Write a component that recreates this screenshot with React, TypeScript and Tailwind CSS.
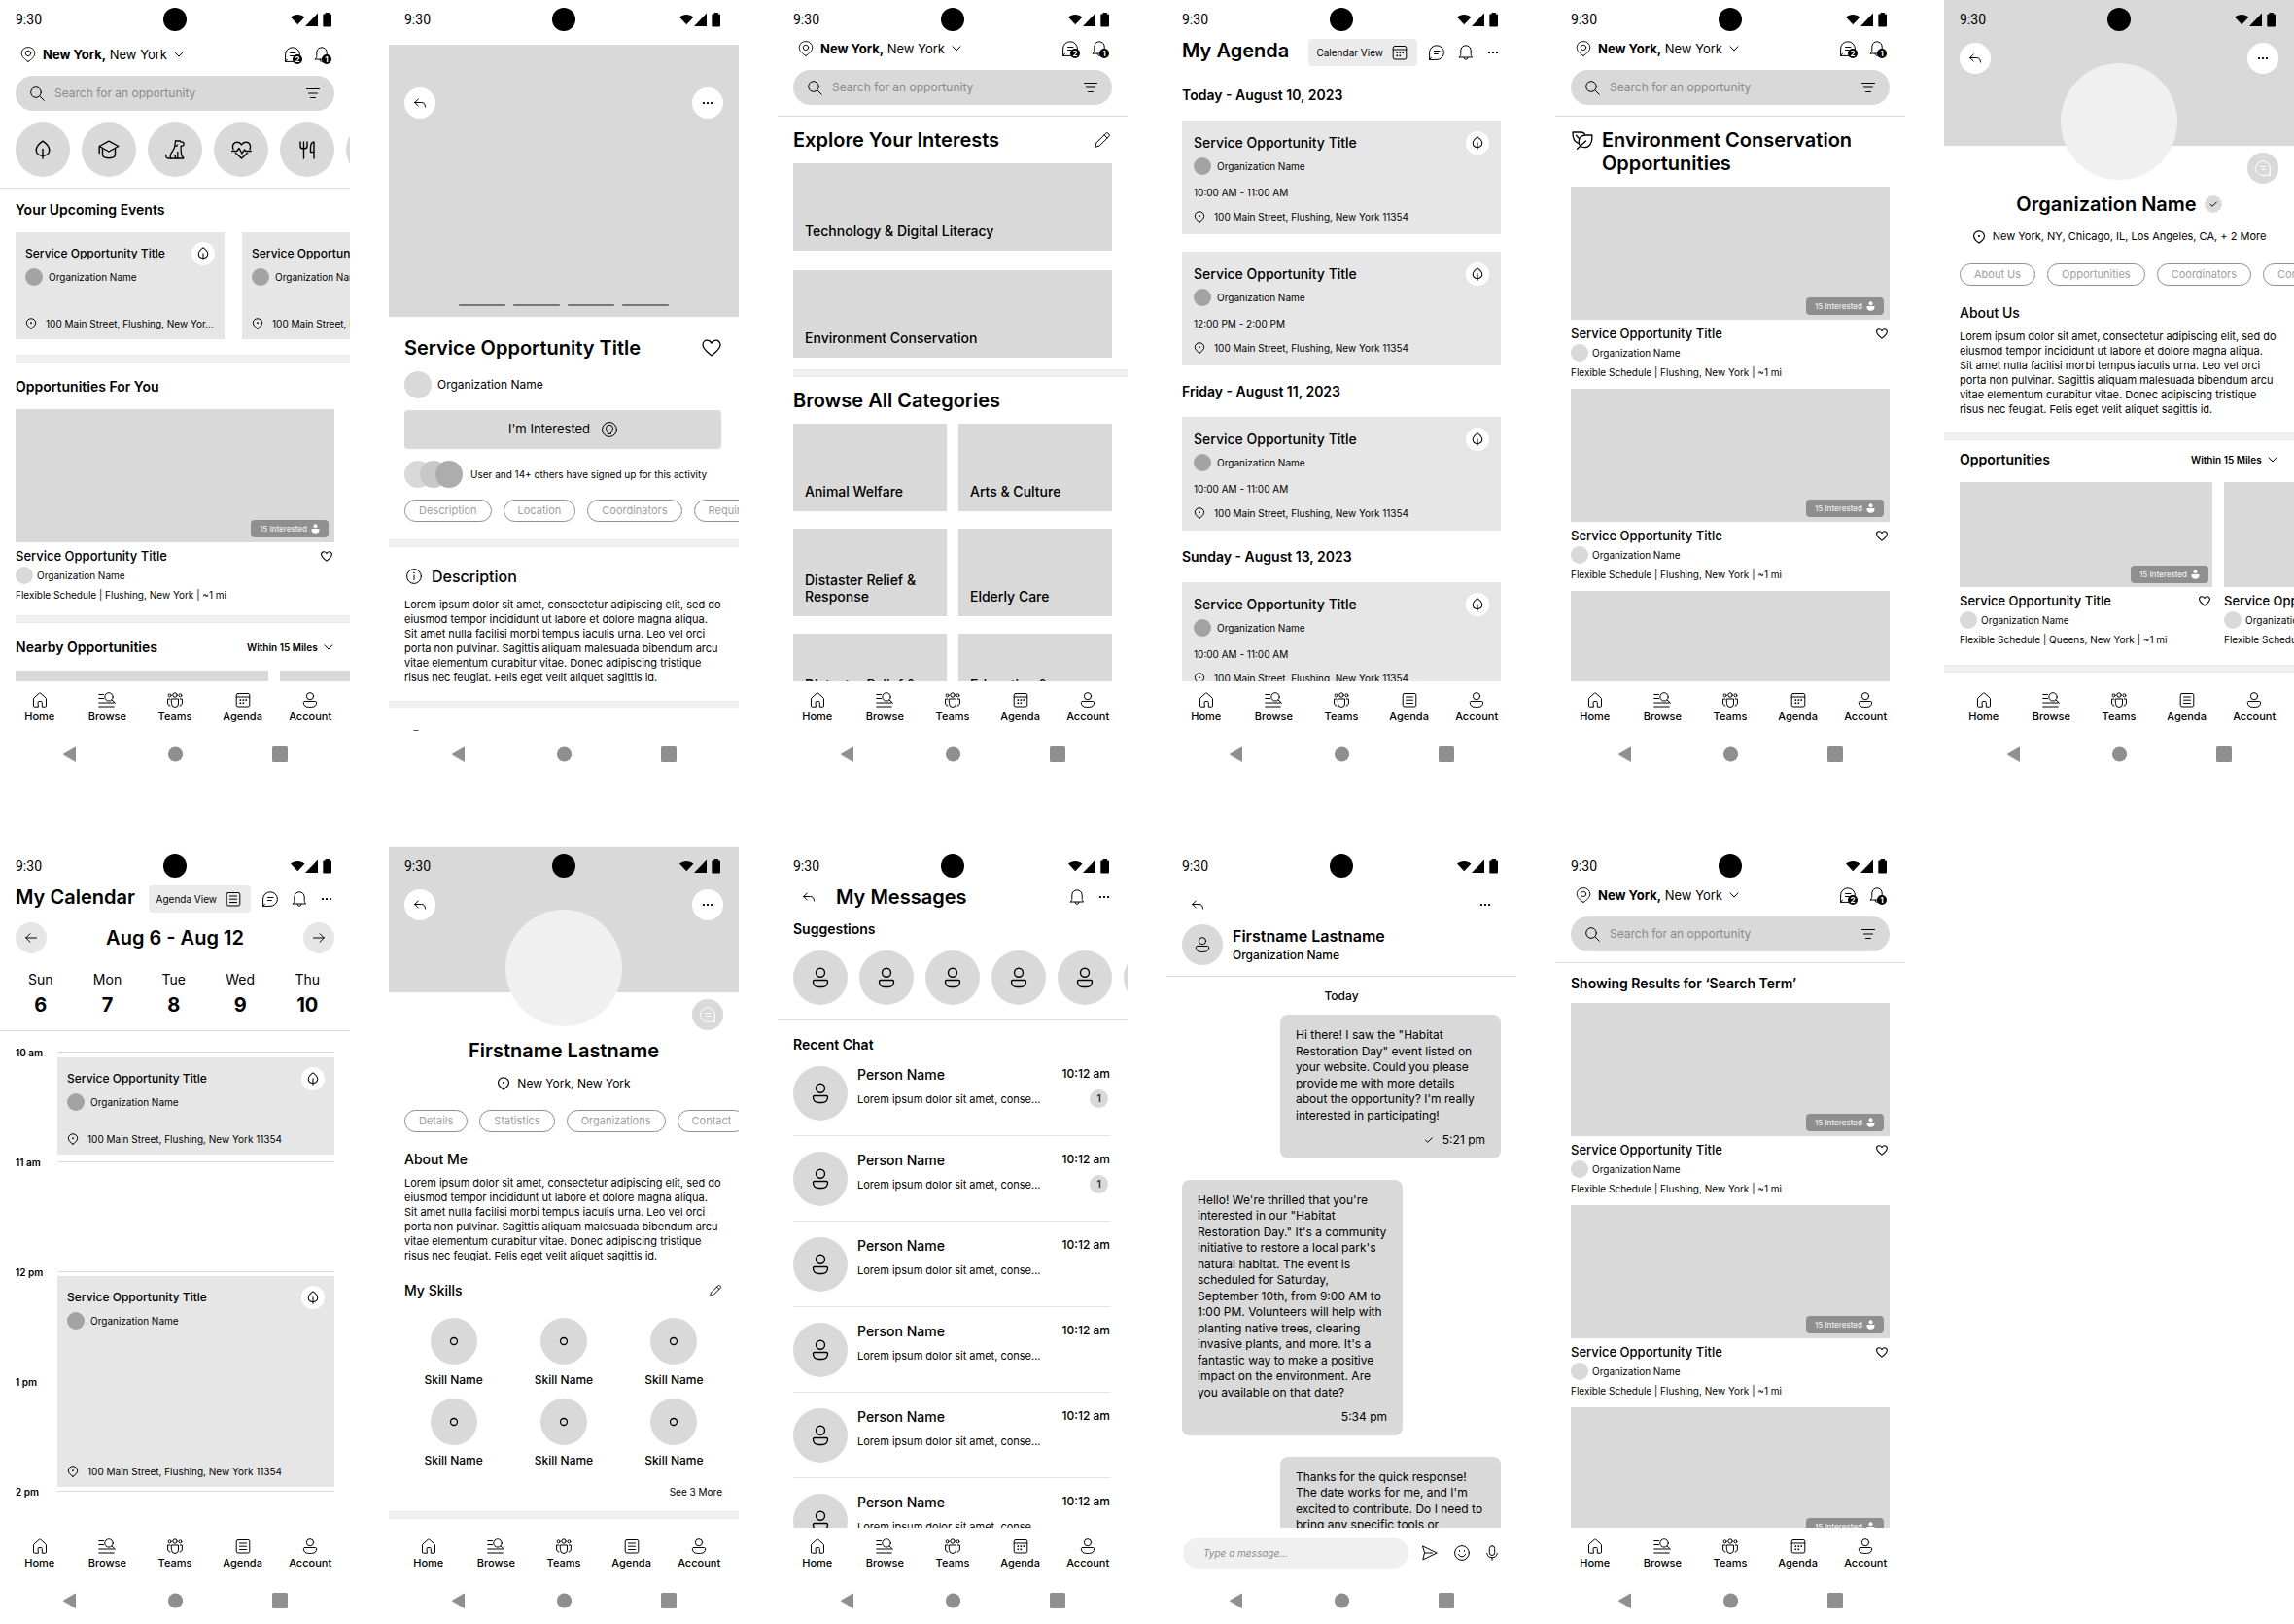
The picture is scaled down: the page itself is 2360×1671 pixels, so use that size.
import React from "react";

type IconProps = { w: number; h: number; vb?: string; sw?: number; className?: string; children: React.ReactNode };

function Icon({ w, h, vb, sw = 1, className = "", children }: IconProps) {
  return (
    <svg
      width={w}
      height={h}
      viewBox={vb ?? `0 0 ${w} ${h}`}
      fill="none"
      stroke="currentColor"
      strokeWidth={sw}
      strokeLinecap="round"
      strokeLinejoin="round"
      className={`shrink-0 ${className}`}
      aria-hidden="true"
    >
      {children}
    </svg>
  );
}

/* ---------- icons ---------- */

const PinIcon = ({ size = 16 }: { size?: number }) => (
  <Icon w={size} h={size} vb="0 0 16 16" sw={0.9}>
    <path d="M8 15.4C4.6 13.2 1.2 10.4 1.2 6.8A6.6 6.3 0 0 1 8 .6a6.6 6.3 0 0 1 6.8 6.2c0 3.6-3.4 6.400-6.800 8.600Z" />
    <circle cx="8" cy="6.900" r="2.700" />
  </Icon>
);
const PinDotIcon = ({ size = 12 }: { size?: number }) => (
  <Icon w={size} h={size} vb="0 0 12 12">
    <path d="M6 11.200C3.500 9.600 1.300 7.600 1.300 5.200A4.600 4.500 0 0 1 6 .8a4.600 4.500 0 0 1 4.700 4.400c0 2.400-2.200 4.400-4.700 6Z" />
    <circle cx="6" cy="5.200" r=".9" fill="currentColor" stroke="none" />
  </Icon>
);
const ChevronIcon = () => (
  <Icon w={10} h={6} sw={1}>
    <path d="M1 .8 5 5 9 .8" />
  </Icon>
);
const SearchIcon = () => (
  <Icon w={15} h={15}>
    <circle cx="6" cy="6" r="5.300" />
    <path d="m10 10 4.300 4.300" />
  </Icon>
);
const FilterIcon = () => (
  <Icon w={14} h={10}>
    <path d="M.5.5h13M2.500 5h9M4.500 9.500h5" />
  </Icon>
);
const ChatIcon = ({ flip = false }: { flip?: boolean }) => (
  <Icon w={16} h={16} className={flip ? "-scale-x-100" : ""}>
    <path d="M.6 15.400V8A7.400 7.300 0 1 1 8 15.400H.6l1.800-2.200" />
    <path d="M5.500 6.500h5.500M5.500 9.500h3.800" />
  </Icon>
);
const BellIcon = () => (
  <Icon w={16} h={16}>
    <path d="M1.300 13h13.400c-1-.8-1.500-2-1.500-3.500V6A5.200 5.200 0 0 0 8 .8 5.200 5.200 0 0 0 2.800 6v3.500c0 1.500-.5 2.700-1.500 3.500Z" />
    <path d="M6 13.300a2 2 0 0 0 4 0" />
  </Icon>
);
const DotsIcon = () => (
  <Icon w={12} h={4}>
    <g fill="currentColor" stroke="none">
      <rect x="1" y="1" width="2" height="2" rx=".5" />
      <rect x="5" y="1" width="2" height="2" rx=".5" />
      <rect x="9" y="1" width="2" height="2" rx=".5" />
    </g>
  </Icon>
);
const BackIcon = () => (
  <Icon w={12} h={10}>
    <path d="M4.300 1 .7 4.500 4.300 8M.7 4.500H7.500c2.500 0 4 1.500 4 4.500" />
  </Icon>
);
const ArrowLeftIcon = () => (
  <Icon w={12} h={10}>
    <path d="M5 .7.7 5 5 9.300M.7 5h10.800" />
  </Icon>
);
const ArrowRightIcon = () => (
  <Icon w={12} h={10}>
    <path d="M7 .7 11.300 5 7 9.300M11.300 5H.5" />
  </Icon>
);
const HomeIcon = () => (
  <Icon w={16} h={16}>
    <path d="M6 15.200H2.500a1 1 0 0 1-1-1V6.800c0-.4.2-.7.5-.9L7.300 1.200c.4-.4 1-.4 1.400 0L14 5.900c.3.200.5.500.5.9v7.400a1 1 0 0 1-1 1H10.300V10.500a1 1 0 0 0-1-1H7a1 1 0 0 0-1 1Z" />
  </Icon>
);
const BrowseIcon = () => (
  <Icon w={18} h={16}>
    <path d="M.7 2.500h4.800M.7 6.500h4.800M.7 11h15.500M.7 15h15.500" />
    <circle cx="11" cy="4.900" r="4.200" fill="white" />
    <path d="m14.200 8.200 3.300 3" />
  </Icon>
);
const TeamsIcon = () => (
  <Icon w={16} h={16}>
    <circle cx="8" cy="3" r="2.200" />
    <circle cx="2.600" cy="3.300" r="1.500" />
    <circle cx="13.400" cy="3.300" r="1.500" />
    <path d="M4.500 7h7v5a3.500 3.500 0 0 1-7 0Z" />
    <path d="M2.800 7H.6v4c0 1.800 1 3 2.400 3M13.200 7h2.200v4c0 1.800-1 3-2.400 3" />
  </Icon>
);
const CalendarIcon = () => (
  <Icon w={16} h={16}>
    <rect x="1.200" y="1.500" width="13.600" height="13.500" rx="1.800" />
    <path d="M1.200 5h13.600" />
    <g fill="currentColor" stroke="none">
      <rect x="4.500" y="7.300" width="1.600" height="1.600" />
      <rect x="7.500" y="7.300" width="1.600" height="1.600" />
      <rect x="10.400" y="7.300" width="1.600" height="1.600" />
      <rect x="4.500" y="10.500" width="1.600" height="1.600" />
      <rect x="7.500" y="10.500" width="1.600" height="1.600" />
    </g>
  </Icon>
);
const ListIcon = () => (
  <Icon w={16} h={16}>
    <rect x="1.200" y="1.500" width="13.600" height="13.500" rx="1.800" />
    <path d="M4.500 5h7M4.500 8.200h7M4.500 11.500h7" />
  </Icon>
);
const PersonIcon = () => (
  <Icon w={16} h={16}>
    <circle cx="8" cy="4.200" r="3.600" />
    <path d="M2.500 9.500h11c.7 0 1.200.5 1.200 1.200 0 3-2 4.700-5 4.700H6.300c-3 0-5-1.700-5-4.700 0-.7.5-1.200 1.200-1.200Z" />
  </Icon>
);
const AvatarIcon = () => (
  <Icon w={18} h={22} sw={1.400}>
    <circle cx="9" cy="5.800" r="4.500" />
    <path d="M2.800 13.500h12.400c.8 0 1.300.5 1.300 1.200 0 3.500-2.300 5.800-5.500 5.800H7c-3.200 0-5.500-2.300-5.500-5.800 0-.7.5-1.200 1.300-1.200Z" />
  </Icon>
);
const LeafIcon = ({ small = false }: { small?: boolean }) => (
  <Icon w={small ? 12 : 16} h={small ? 14 : 20} vb="0 0 16 20" sw={small ? 1.5 : 1.400}>
    <path d="M8 1.200C4.500 3.600 1.200 6.800 1.200 10.400c0 3.600 3 6 6.800 6s6.800-2.400 6.800-6C14.800 6.800 11.500 3.600 8 1.200Z" />
    <path d="M8 9.500v9.500" />
  </Icon>
);
const CapIcon = () => (
  <Icon w={22} h={20} sw={1.400}>
    <path d="M1.200 6.500 11 1.200l9.800 5.300L11 12 1.200 6.500v7" />
    <path d="M4.500 8.500v6.800c0 2 2.500 3.400 6.500 3.400s6.500-1.400 6.500-3.400V8.500" />
  </Icon>
);
const DogIcon = () => (
  <Icon w={20} h={20} sw={1.300}>
    <path d="M10.500 1h4.800l.9 1.200h1.800c.7 0 1 .4 1 1v1.500c0 .9-.8 1.500-2 1.500h-.8c-.5 3.300.3 5.500.3 8.300 0 1.600.3 2 1.200 2.600.8.500 1.100 1 1.100 1.900H3A2.300 2.300 0 0 1 .8 16.800v-1.300" />
    <path d="M10.500 1 9.800 5.500c.4 1.200 2.200 1.200 2.700-.5M9.800 6.500c-.3 4-4.600 6-4.600 10.200 0 .9.200 1.600.6 2.300M12.800 12.500V19M9 15.500c1.600.6 1.800 2 1.500 3.500" />
  </Icon>
);
const HeartPulseIcon = () => (
  <Icon w={21} h={19} sw={1.400}>
    <path d="M2 8.500C.5 4.500 2.500 1.200 5.800 1.200c2 0 3.600 1 4.700 2.800 1.100-1.800 2.700-2.800 4.700-2.800 3.300 0 5.300 3.300 3.800 7.300M4.500 12.500l6 5.500 6-5.500" />
    <path d="M.7 10.500h5l2.300-3 3 5.500 2.500-4 1.200 1.500h5.600" />
  </Icon>
);
const ForkIcon = () => (
  <Icon w={16} h={19} sw={1.400}>
    <path d="M1 1v4.500c0 1.500 1.200 2.500 3.500 2.500S8 7 8 5.500V1M4.500 1v17M15 1v17M15 1c-2.500.5-3.500 2.500-3.500 6v4.500H15" />
  </Icon>
);
const HeartIcon = ({ big = false }: { big?: boolean }) => (
  <Icon w={big ? 20 : 12} h={big ? 18 : 11} vb="0 0 20 18" sw={big ? 1.300 : 1.800}>
    <path d="M10 16.800C6 13.500 1 10.200 1 5.800 1 3 3 1.200 5.400 1.200c1.900 0 3.500 1 4.600 2.900 1.100-1.900 2.700-2.900 4.600-2.900C17 1.200 19 3 19 5.800c0 4.400-5 7.700-9 11Z" />
  </Icon>
);
const PencilIcon = ({ size = 16 }: { size?: number }) => (
  <Icon w={size} h={size} vb="0 0 16 16" sw={size < 16 ? 1.300 : 1}>
    <path d="M.8 15.200 2 10.800 11.500 1.300a2 2 0 0 1 2.800 0l.4.4a2 2 0 0 1 0 2.800L5.200 14 .8 15.200ZM10 2.900 13.100 6" />
  </Icon>
);
const InfoIcon = () => (
  <Icon w={16} h={16}>
    <circle cx="8" cy="8" r="7.400" />
    <path d="M8 7v4.500" />
    <circle cx="8" cy="4.500" r=".8" fill="currentColor" stroke="none" />
  </Icon>
);
const BulbIcon = () => (
  <Icon w={16} h={16}>
    <circle cx="8" cy="8" r="7.400" />
    <path d="M6.500 10.700c0-1-2-1.800-2-3.900a3.500 3.500 0 0 1 7 0c0 2.100-2 2.900-2 3.900v1.800h-3ZM6.500 10.700h3" />
  </Icon>
);
const LeavesIcon = () => (
  <Icon w={22} h={19} sw={1.300}>
    <path d="M6.500 12.300C2.300 10.800.8 7 1 1h8.500c2 0 3.400.8 4 2.200M4.500 4.300l3.300 3.500" />
    <path d="M20.900 4H14.500C9.800 4 7.200 7.200 7.200 11c0 3.400 2.500 5.700 6 5.700 5 0 8.200-4.700 7.700-12.700ZM5.500 18.300 9 15l5.500-5" />
  </Icon>
);
const SendIcon = () => (
  <Icon w={16} h={16}>
    <path d="M.8 1 15.200 8 .8 15 2.500 8ZM2.500 8h8" />
  </Icon>
);
const SmileIcon = () => (
  <Icon w={16} h={16}>
    <circle cx="8" cy="8" r="7.400" />
    <path d="M4.500 9.500c.8 1.600 2 2.300 3.500 2.300s2.700-.7 3.500-2.300" />
    <path d="M5.500 5.500v.8M10.500 5.500v.8" />
  </Icon>
);
const MicIcon = () => (
  <Icon w={12} h={16}>
    <rect x="3.300" y=".7" width="5.400" height="9.800" rx="2.700" />
    <path d="M.7 8.500c.3 2.700 2.300 4.300 5.300 4.300s5-1.600 5.300-4.300M6 12.800v2.500" />
  </Icon>
);
const CheckIcon = () => (
  <Icon w={8} h={6}>
    <path d="M.6 3.200 2.800 5.300 7.400.7" />
  </Icon>
);
const VerifiedIcon = () => (
  <Icon w={18} h={18}>
    <circle cx="9" cy="9" r="8" fill="#d9d9d9" stroke="#d9d9d9" strokeWidth="2" strokeDasharray="1.500 2.690" />
    <path d="M6 9.300 8.100 11.200 12.300 7" />
  </Icon>
);

/* ---------- phone shell ---------- */

function StatusBar({ shaded = false }: { shaded?: boolean }) {
  return (
    <div className={`grid h-10 shrink-0 grid-cols-3 items-center px-4 ${shaded ? "bg-[#d9d9d9]" : ""}`}>
      <span className="font-[Roboto,sans-serif] text-sm">9:30</span>
      <span className="size-6 justify-self-center rounded-full bg-black" />
      <Icon w={43} h={16} className="mr-[2px] justify-self-end">
        <g fill="currentColor" stroke="none">
          <path d="M0 5.500C4.300 2 10.200 2 14.500 5.500L7.250 13.300Z" />
          <path d="M15 15H28V1.500Z" />
          <rect x="33.300" y="2.500" width="8.700" height="13" rx="1" />
          <rect x="35.500" y="1" width="4.300" height="3" />
        </g>
      </Icon>
    </div>
  );
}

function SystemNav() {
  return (
    <div className="flex h-12 shrink-0 items-center justify-between px-16 text-[#8f8f8f]">
      <button aria-label="Back">
        <Icon w={16} h={16}>
          <path d="M1.500 8 13.500 1v14Z" fill="currentColor" />
        </Icon>
      </button>
      <button aria-label="Home screen">
        <Icon w={16} h={16}>
          <circle cx="8.500" cy="8" r="7.600" fill="currentColor" stroke="none" />
        </Icon>
      </button>
      <button aria-label="Recent apps">
        <Icon w={16} h={16}>
          <rect x="0" y="0" width="16" height="16" rx="1.500" fill="currentColor" stroke="none" />
        </Icon>
      </button>
    </div>
  );
}

function TabBar({ agenda = "calendar" }: { agenda?: "calendar" | "list" }) {
  const tabs: [string, React.ReactNode][] = [
    ["Home", <HomeIcon />],
    ["Browse", <BrowseIcon />],
    ["Teams", <TeamsIcon />],
    ["Agenda", agenda === "list" ? <ListIcon /> : <CalendarIcon />],
    ["Account", <PersonIcon />],
  ];
  return (
    <nav className="grid h-[51px] shrink-0 grid-cols-5 px-[6px] pt-[11px]">
      {tabs.map(([label, icon]) => (
        <a key={label} href="#" className="flex flex-col items-center gap-[2px] text-[11px] leading-[14px] font-medium">
          {icon}
          {label}
        </a>
      ))}
    </nav>
  );
}

type PhoneProps = { shaded?: boolean; footer?: React.ReactNode; children: React.ReactNode };

function Phone({ shaded, footer, children }: PhoneProps) {
  return (
    <section className="flex aspect-[9/20] flex-col overflow-hidden bg-white">
      <StatusBar shaded={shaded} />
      <div className="min-h-0 flex-1 overflow-hidden">{children}</div>
      {footer}
      <SystemNav />
    </section>
  );
}

/* ---------- shared parts ---------- */

const Band = ({ className = "" }: { className?: string }) => (
  <div className={`h-2 border-y border-[#e9e9e9] bg-[#f0f0f0] ${className}`} />
);

function Badge({ children }: { children: React.ReactNode }) {
  return (
    <span className="absolute -right-[2px] -bottom-[2px] flex size-[10px] items-center justify-center rounded-full bg-black text-[8px] leading-none font-bold text-white">
      {children}
    </span>
  );
}

function SearchHeader() {
  return (
    <header>
      <div className="flex h-5 items-center justify-between px-[21px]">
        <button className="flex items-center gap-[7px] text-[13px] leading-5">
          <PinIcon />
          <span>
            <b className="font-bold">New York,</b> New York
          </span>
          <ChevronIcon />
        </button>
        <div className="flex gap-[14px]">
          <button className="relative" aria-label="Messages">
            <ChatIcon />
            <Badge>2</Badge>
          </button>
          <button className="relative" aria-label="Notifications">
            <BellIcon />
            <Badge>1</Badge>
          </button>
        </div>
      </div>
      <div className="mx-4 mt-3 flex h-9 items-center gap-[10px] rounded-full bg-[#d9d9d9] px-[15px]">
        <SearchIcon />
        <input
          type="search"
          aria-label="Search for an opportunity"
          placeholder="Search for an opportunity"
          className="min-w-0 flex-1 bg-transparent text-xs outline-none placeholder:text-[#8a8a8a]"
        />
        <button aria-label="Filter">
          <FilterIcon />
        </button>
      </div>
    </header>
  );
}

const RoundButton = ({ label, className, children }: { label: string; className: string; children: React.ReactNode }) => (
  <button aria-label={label} className={`flex size-8 shrink-0 items-center justify-center rounded-full ${className}`}>
    {children}
  </button>
);

function EventCard({ compact = false, time, address, className = "" }: { compact?: boolean; time?: string; address: string; className?: string }) {
  return (
    <article className={`flex flex-col bg-[#e6e6e6] ${compact ? "p-[10px]" : "px-3 pt-[11px] pb-3"} ${className}`}>
      <div className="flex h-6 items-center justify-between">
        <h3 className={`whitespace-nowrap font-medium ${compact ? "text-xs" : "text-sm"}`}>Service Opportunity Title</h3>
        <span className="flex size-6 shrink-0 items-center justify-center rounded-full bg-white">
          <LeafIcon small />
        </span>
      </div>
      <div className="mt-[3px] flex items-center gap-[6px] text-[10px] leading-[18px]">
        <span className="size-[18px] shrink-0 rounded-full bg-[#a3a3a3]" />
        <span className="whitespace-nowrap">Organization Name</span>
      </div>
      {time && <p className="mt-3 text-[10px] leading-3">{time}</p>}
      <div className={`flex items-center gap-[9px] text-[10px] leading-3 ${time ? "mt-[13px]" : "mt-auto"}`}>
        <PinDotIcon />
        <span className="whitespace-nowrap">{address}</span>
      </div>
    </article>
  );
}

function OpportunityCard({ small = false, place = "Flushing", className = "" }: { small?: boolean; place?: string; className?: string }) {
  return (
    <article className={className}>
      <div className={`relative bg-[#d9d9d9] ${small ? "h-[108px]" : "h-[137px]"}`}>
        <span
          className={`absolute flex h-[18px] w-20 items-center justify-center gap-1 rounded bg-[#8f8f8f] text-[8px] font-medium text-[#f0f0f0] ${
            small ? "right-1 bottom-1" : "right-[6px] bottom-[5px]"
          }`}
        >
          15 Interested
          <Icon w={9} h={10}>
            <g fill="white" stroke="none">
              <circle cx="4.500" cy="2.200" r="2" />
              <path d="M1.200 5h6.600c.5 0 .8.3.8.8 0 2.700-1.600 4-4.100 4S.4 8.500.4 5.800c0-.5.3-.8.8-.8Z" />
            </g>
          </Icon>
        </span>
      </div>
      <div className="mt-1 flex h-5 items-center justify-between pr-[2px]">
        <h3 className="whitespace-nowrap text-[13px] leading-5 font-medium">Service Opportunity Title</h3>
        <button aria-label="Save">
          <HeartIcon />
        </button>
      </div>
      <div className="mt-[1px] flex items-center gap-1 text-[10px] leading-[18px]">
        <span className="size-[18px] shrink-0 rounded-full bg-[#d9d9d9]" />
        <span className="whitespace-nowrap">Organization Name</span>
      </div>
      <p className="mt-1 text-[10px] leading-[14px] whitespace-nowrap">Flexible Schedule | {place}, New York | ~1 mi</p>
    </article>
  );
}

function RangeSelect() {
  return (
    <label className="flex items-center gap-[6px] pr-[1px]">
      <select aria-label="Distance" className="appearance-none bg-transparent text-[10px] leading-3 font-semibold outline-none">
        <option>Within 15 Miles</option>
      </select>
      <ChevronIcon />
    </label>
  );
}

function Chips({ items, className = "" }: { items: string[]; className?: string }) {
  return (
    <div className={`flex gap-3 overflow-hidden pl-4 ${className}`}>
      {items.map((item) => (
        <button
          key={item}
          className="h-[23px] shrink-0 rounded-full border border-[#8f8f8f] px-[14px] text-[11px] leading-[21px] text-[#a0a0a0]"
        >
          {item}
        </button>
      ))}
    </div>
  );
}

const LOREM = [
  "Lorem ipsum dolor sit amet, consectetur adipiscing elit, sed do",
  "eiusmod tempor incididunt ut labore et dolore magna aliqua.",
  "Sit amet nulla facilisi morbi tempus iaculis urna. Leo vel orci",
  "porta non pulvinar. Sagittis aliquam malesuada bibendum arcu",
  "vitae elementum curabitur vitae. Donec adipiscing tristique",
  "risus nec feugiat. Felis eget velit aliquet sagittis id.",
];

const Lorem = ({ className = "" }: { className?: string }) => (
  <p className={`px-4 text-[11px] leading-[15px] whitespace-pre ${className}`}>{LOREM.join("\n")}</p>
);

const H2 = ({ className = "", children }: { className?: string; children: React.ReactNode }) => (
  <h2 className={`text-sm leading-[17px] font-semibold ${className}`}>{children}</h2>
);

function ProfileTop({ name, verified = false, location }: { name: string; verified?: boolean; location: React.ReactNode }) {
  return (
    <>
      <div className="relative flex h-[110px] items-start justify-between bg-[#d9d9d9] px-4 pt-1">
        <RoundButton label="Go back" className="bg-white">
          <BackIcon />
        </RoundButton>
        <span className="absolute top-[25px] left-1/2 size-[120px] -translate-x-1/2 rounded-full bg-[#f0f0f0]" />
        <RoundButton label="More" className="bg-white">
          <DotsIcon />
        </RoundButton>
      </div>
      <div className="flex justify-end px-4 pt-[7px]">
        <RoundButton label="Send message" className="bg-[#d9d9d9] text-white">
          <ChatIcon flip />
        </RoundButton>
      </div>
      <div className="mt-[9px] flex items-center justify-center gap-2">
        <h1 className="text-xl leading-6 font-semibold">{name}</h1>
        {verified && <VerifiedIcon />}
      </div>
      <div className="mt-[13px] flex h-[17px] items-center justify-center gap-[7px]">
        <PinDotIcon size={14} />
        {location}
      </div>
    </>
  );
}

const CARD_ADDRESS = "100 Main Street, Flushing, New York 11354";

/* ---------- screens ---------- */

function HomeScreen() {
  const interests = [<LeafIcon />, <CapIcon />, <DogIcon />, <HeartPulseIcon />, <ForkIcon />, null];
  return (
    <Phone footer={<TabBar />}>
      <div className="pt-[6px]">
        <SearchHeader />
      </div>
      <div className="mt-3 flex gap-3 overflow-hidden border-b border-[#d9d9d9] pb-[11px] pl-4">
        {interests.map((icon, i) => (
          <button key={i} aria-label={`Interest ${i + 1}`} className="flex size-14 shrink-0 items-center justify-center rounded-full bg-[#d9d9d9]">
            {icon}
          </button>
        ))}
      </div>
      <H2 className="mt-[13px] px-4">Your Upcoming Events</H2>
      <div className="mt-[15px] flex gap-[18px] overflow-hidden pl-4">
        <EventCard compact address="100 Main Street, Flushing, New Yor..." className="h-[110px] w-[215px] shrink-0" />
        <EventCard compact address="100 Main Street, Flushing, New Yor..." className="h-[110px] w-[215px] shrink-0" />
      </div>
      <Band className="mt-4 ml-4" />
      <H2 className="mt-4 px-4">Opportunities For You</H2>
      <OpportunityCard className="mx-4 mt-[15px]" />
      <Band className="mt-[14px] ml-4" />
      <div className="mt-4 flex items-center justify-between px-4">
        <H2>Nearby Opportunities</H2>
        <RangeSelect />
      </div>
      <div className="mt-4 flex gap-3 overflow-hidden pl-4">
        <OpportunityCard small className="w-[260px] shrink-0" />
        <OpportunityCard small className="w-[260px] shrink-0" />
      </div>
    </Phone>
  );
}

function OpportunityScreen() {
  return (
    <Phone>
      <div className="relative mt-[6px] flex h-[280px] items-start justify-between bg-[#d9d9d9] px-4 pt-11">
        <RoundButton label="Go back" className="bg-white">
          <BackIcon />
        </RoundButton>
        <RoundButton label="More" className="bg-white">
          <DotsIcon />
        </RoundButton>
        <div className="absolute inset-x-0 bottom-[11px] flex justify-center gap-2">
          {[0, 1, 2, 3].map((i) => (
            <span key={i} className="h-[2px] w-12 rounded-full bg-[#777777]" />
          ))}
        </div>
      </div>
      <div className="mt-5 pr-[18px] pl-4">
        <div className="flex items-center justify-between">
          <h1 className="text-xl leading-6 font-semibold">Service Opportunity Title</h1>
          <button aria-label="Save">
            <HeartIcon big />
          </button>
        </div>
        <div className="mt-3 flex items-center gap-[6px] text-xs">
          <span className="size-7 rounded-full bg-[#d9d9d9]" />
          Organization Name
        </div>
        <button className="mt-3 flex h-10 w-full items-center justify-center gap-3 rounded bg-[#d9d9d9] text-[13px]">
          I'm Interested
          <BulbIcon />
        </button>
        <div className="mt-3 flex items-center text-[10px]">
          <span className="size-7 rounded-full bg-[#d9d9d9]" />
          <span className="-ml-3 size-7 rounded-full bg-[#c8c8c8]" />
          <span className="-ml-3 size-7 rounded-full bg-[#adadad]" />
          <span className="ml-2 whitespace-nowrap">User and 14+ others have signed up for this activity</span>
        </div>
      </div>
      <Chips className="mt-3" items={["Description", "Location", "Coordinators", "Requirements"]} />
      <Band className="mt-[18px]" />
      <div className="mt-5 flex h-5 items-center gap-[10px] pl-[18px]">
        <InfoIcon />
        <h2 className="text-base leading-5 font-medium">Description</h2>
      </div>
      <Lorem className="mt-3" />
      <Band className="mt-4" />
      <div className="mt-5 flex h-5 items-center pl-5">
        <PinIcon />
      </div>
    </Phone>
  );
}

const Tile = ({ children }: { children: React.ReactNode }) => (
  <a href="#" className="flex h-[90px] items-end bg-[#d9d9d9] px-3 pb-3 text-sm leading-[17px] font-medium">
    {children}
  </a>
);

function BrowseScreen() {
  return (
    <Phone footer={<TabBar />}>
      <SearchHeader />
      <div className="mt-[11px] border-t border-[#d9d9d9] px-4 pt-3">
        <div className="flex items-center justify-between pr-[2px]">
          <h2 className="text-xl leading-6 font-semibold">Explore Your Interests</h2>
          <button aria-label="Edit interests">
            <PencilIcon />
          </button>
        </div>
        <div className="mt-3 grid gap-5">
          <Tile>Technology &amp; Digital Literacy</Tile>
          <Tile>Environment Conservation</Tile>
        </div>
      </div>
      <Band className="mt-3 ml-4" />
      <div className="px-4 pt-3">
        <h2 className="text-xl leading-6 font-semibold">Browse All Categories</h2>
        <div className="mt-3 grid grid-cols-2 gap-x-3 gap-y-[18px]">
          <Tile>Animal Welfare</Tile>
          <Tile>Arts &amp; Culture</Tile>
          <Tile>Distaster Relief &amp; Response</Tile>
          <Tile>Elderly Care</Tile>
          <Tile>Distaster Relief &amp; Response</Tile>
          <Tile>
            Education &amp;
            <br />
            Tutoring
          </Tile>
        </div>
      </div>
    </Phone>
  );
}

function ScheduleHeader({ title, view, icon }: { title: string; view: string; icon: React.ReactNode }) {
  return (
    <header className="flex justify-between pr-[18px] pl-4">
      <h1 className="text-xl leading-6 font-semibold">{title}</h1>
      <div className="flex items-center gap-3">
        <button className="flex h-7 items-center gap-[9px] rounded bg-[#ebebeb] pr-[10px] pl-2 text-[10px]">
          {view}
          {icon}
        </button>
        <div className="flex items-center gap-[14px]">
          <button aria-label="Messages">
            <ChatIcon />
          </button>
          <button aria-label="Notifications">
            <BellIcon />
          </button>
          <button aria-label="More">
            <DotsIcon />
          </button>
        </div>
      </div>
    </header>
  );
}

function AgendaScreen() {
  const days: [string, string[]][] = [
    ["Today - August 10, 2023", ["10:00 AM - 11:00 AM", "12:00 PM - 2:00 PM"]],
    ["Friday - August 11, 2023", ["10:00 AM - 11:00 AM"]],
    ["Sunday - August 13, 2023", ["10:00 AM - 11:00 AM"]],
  ];
  return (
    <Phone footer={<TabBar agenda="list" />}>
      <ScheduleHeader title="My Agenda" view="Calendar View" icon={<CalendarIcon />} />
      <div className="mt-[21px] flex flex-col gap-[18px] px-4">
        {days.map(([day, times]) => (
          <React.Fragment key={day}>
            <H2>{day}</H2>
            {times.map((time) => (
              <EventCard key={time} time={time} address={CARD_ADDRESS} />
            ))}
          </React.Fragment>
        ))}
      </div>
    </Phone>
  );
}

function CategoryScreen() {
  return (
    <Phone footer={<TabBar />}>
      <SearchHeader />
      <div className="mt-[11px] border-t border-[#d9d9d9] px-4 pt-3">
        <div className="flex gap-[9px] pl-[1px]">
          <div className="pt-[3px]">
            <LeavesIcon />
          </div>
          <h1 className="text-xl leading-6 font-semibold">Environment Conservation Opportunities</h1>
        </div>
        <div className="mt-3 grid gap-[10px]">
          <OpportunityCard />
          <OpportunityCard />
          <OpportunityCard />
        </div>
      </div>
    </Phone>
  );
}

function OrganizationScreen() {
  return (
    <Phone shaded footer={<TabBar agenda="list" />}>
      <ProfileTop
        name="Organization Name"
        verified
        location={<span className="text-[11px]">New York, NY, Chicago, IL, Los Angeles, CA, + 2 More</span>}
      />
      <Chips className="mt-[19px]" items={["About Us", "Opportunities", "Coordinators", "Contact"]} />
      <h2 className="mt-[19px] px-4 text-sm leading-[17px] font-medium">About Us</h2>
      <Lorem className="mt-[9px]" />
      <Band className="mt-4" />
      <div className="mt-[11px] flex items-center justify-between px-4">
        <H2>Opportunities</H2>
        <RangeSelect />
      </div>
      <div className="mt-[15px] flex gap-3 overflow-hidden pl-4">
        <OpportunityCard small place="Queens" className="w-[260px] shrink-0" />
        <OpportunityCard small place="Queens" className="w-[260px] shrink-0" />
      </div>
      <Band className="mt-[19px]" />
    </Phone>
  );
}

function CalendarScreen() {
  const days = [
    ["Sun", "6"],
    ["Mon", "7"],
    ["Tue", "8"],
    ["Wed", "9"],
    ["Thu", "10"],
  ];
  const hours = ["10 am", "11 am", "12 pm", "1 pm", "2 pm"];
  const rows = ["row-start-1", "row-start-2", "row-start-3", "row-start-4", "row-start-5"];
  return (
    <Phone footer={<TabBar agenda="list" />}>
      <ScheduleHeader title="My Calendar" view="Agenda View" icon={<ListIcon />} />
      <div className="mt-[10px] flex items-center justify-between px-4">
        <RoundButton label="Previous week" className="bg-[#e6e6e6]">
          <ArrowLeftIcon />
        </RoundButton>
        <h2 className="text-xl leading-6 font-semibold">Aug 6 - Aug 12</h2>
        <RoundButton label="Next week" className="bg-[#e6e6e6]">
          <ArrowRightIcon />
        </RoundButton>
      </div>
      <div className="mt-[18px] flex justify-between border-b border-[#d9d9d9] pr-[31px] pb-[14px] pl-[29px]">
        {days.map(([day, date]) => (
          <button key={day} className="flex flex-col items-center gap-[6px] text-sm leading-[17px]">
            {day}
            <b className="text-xl leading-6 font-bold">{date}</b>
          </button>
        ))}
      </div>
      <div className="mt-[21px] grid auto-rows-[113px] grid-cols-[43px_1fr] px-4">
        {hours.map((hour, i) => (
          <React.Fragment key={hour}>
            <span className={`col-start-1 -mt-[5px] text-[10px] leading-3 font-semibold ${rows[i]}`}>{hour}</span>
            <span className={`col-start-2 border-t border-[#d9d9d9] ${rows[i]}`} />
          </React.Fragment>
        ))}
        <EventCard compact address={CARD_ADDRESS} className="col-start-2 row-start-1 mt-[6px] mb-[7px]" />
        <EventCard compact address={CARD_ADDRESS} className="col-start-2 row-span-2 row-start-3 mt-[5px] mb-1" />
      </div>
    </Phone>
  );
}

function ProfileScreen() {
  return (
    <Phone shaded footer={<TabBar agenda="list" />}>
      <ProfileTop name="Firstname Lastname" location={<span className="text-xs">New York, New York</span>} />
      <Chips className="mt-[19px]" items={["Details", "Statistics", "Organizations", "Contact"]} />
      <h2 className="mt-[19px] px-4 text-sm leading-[17px] font-medium">About Me</h2>
      <Lorem className="mt-[9px]" />
      <div className="mt-[19px] flex items-center justify-between pr-[18px] pl-4">
        <h2 className="text-sm leading-[17px] font-medium">My Skills</h2>
        <button aria-label="Edit skills">
          <PencilIcon size={12} />
        </button>
      </div>
      <div className="mt-5 grid grid-cols-3 gap-y-3 px-[10px]">
        {[0, 1, 2, 3, 4, 5].map((i) => (
          <div key={i} className="flex flex-col items-center gap-2 text-xs leading-[15px] font-medium">
            <span className="flex size-12 items-center justify-center rounded-full bg-[#d9d9d9]">
              <Icon w={10} h={10} sw={1.300}>
                <circle cx="5" cy="5" r="3.500" />
              </Icon>
            </span>
            Skill Name
          </div>
        ))}
      </div>
      <div className="mt-[19px] flex justify-end pr-[17px]">
        <a href="#" className="text-[10px] leading-3">
          See 3 More
        </a>
      </div>
      <Band className="mt-[14px]" />
    </Phone>
  );
}

function MessagesScreen() {
  const chats = [1, 1, 0, 0, 0, 0];
  return (
    <Phone footer={<TabBar />}>
      <header className="flex h-6 items-center pr-[18px] pl-[26px]">
        <button aria-label="Go back">
          <BackIcon />
        </button>
        <h1 className="ml-[22px] flex-1 text-xl leading-6 font-semibold">My Messages</h1>
        <div className="flex items-center gap-[14px]">
          <button aria-label="Notifications">
            <BellIcon />
          </button>
          <button aria-label="More">
            <DotsIcon />
          </button>
        </div>
      </header>
      <H2 className="mt-3 px-4">Suggestions</H2>
      <div className="mt-[14px] flex gap-3 overflow-hidden border-b border-[#d9d9d9] pb-[15px] pl-4">
        {[0, 1, 2, 3, 4, 5].map((i) => (
          <button key={i} aria-label={`Suggested contact ${i + 1}`} className="flex size-14 shrink-0 items-center justify-center rounded-full bg-[#d9d9d9]">
            {i < 5 && <AvatarIcon />}
          </button>
        ))}
      </div>
      <H2 className="mt-4 px-4">Recent Chat</H2>
      <ul className="mt-[14px] grid gap-4 pr-[18px] pl-4">
        {chats.map((unread, i) => (
          <li key={i} className="flex gap-[10px] border-b border-[#e4e4e4] pb-[15px]">
            <span className="flex size-14 shrink-0 items-center justify-center rounded-full bg-[#d9d9d9]">
              <AvatarIcon />
            </span>
            <div className="flex-1">
              <h3 className="text-sm leading-[18px] font-medium">Person Name</h3>
              <p className="mt-2 text-[11px] leading-4 whitespace-nowrap">Lorem ipsum dolor sit amet, conse...</p>
            </div>
            <div className="flex flex-col items-end">
              <time className="text-xs leading-4 font-medium whitespace-nowrap">10:12 am</time>
              {unread > 0 && (
                <span className="mt-2 mr-[2px] flex size-[19px] items-center justify-center rounded-full bg-[#d9d9d9] text-[11px] font-semibold text-[#333333]">
                  {unread}
                </span>
              )}
            </div>
          </li>
        ))}
      </ul>
    </Phone>
  );
}

function Bubble({ mine = false, time, children }: { mine?: boolean; time: string; children: React.ReactNode }) {
  return (
    <div className={`flex w-[227px] flex-col gap-[9px] rounded-lg bg-[#d9d9d9] px-4 pt-[13px] pb-[10px] text-xs leading-snug ${mine ? "self-end" : "self-start"}`}>
      <p>{children}</p>
      <div className="flex items-center justify-end gap-[10px]">
        {mine && <CheckIcon />}
        <time>{time}</time>
      </div>
    </div>
  );
}

function ChatScreen() {
  return (
    <Phone
      footer={
        <form className="flex h-[51px] shrink-0 items-center pr-[19px] pl-[17px]">
          <input
            aria-label="Message"
            placeholder="Type a message..."
            className="h-8 min-w-0 flex-1 rounded-full bg-[#f0f0f0] px-[21px] text-[10px] italic outline-none placeholder:text-[#8a8a8a]"
          />
          <div className="ml-[14px] flex items-center gap-[17px]">
            <button type="button" aria-label="Send">
              <SendIcon />
            </button>
            <button type="button" aria-label="Emoji">
              <SmileIcon />
            </button>
            <button type="button" aria-label="Voice message">
              <MicIcon />
            </button>
          </div>
        </form>
      }
    >
      <header className="border-b border-[#d9d9d9] pb-[11px]">
        <div className="flex h-10 items-center justify-between px-[26px]">
          <button aria-label="Go back">
            <BackIcon />
          </button>
          <button aria-label="More">
            <DotsIcon />
          </button>
        </div>
        <div className="flex items-center gap-[10px] px-4">
          <span className="flex size-[42px] items-center justify-center rounded-full bg-[#d9d9d9]">
            <PersonIcon />
          </span>
          <div>
            <h1 className="text-base leading-[22px] font-semibold">Firstname Lastname</h1>
            <p className="text-xs leading-[18px] font-medium">Organization Name</p>
          </div>
        </div>
      </header>
      <p className="pt-3 text-center text-xs leading-4 font-medium">Today</p>
      <div className="mt-[11px] flex flex-col gap-[22px] px-4">
        <Bubble mine time="5:21 pm">
          Hi there! I saw the "Habitat Restoration Day" event listed on your website. Could you please provide me with more details
          about the opportunity? I'm really interested in participating!
        </Bubble>
        <Bubble time="5:34 pm">
          Hello! We're thrilled that you're interested in our "Habitat Restoration Day." It's a community initiative to restore a
          local park's natural habitat. The event is scheduled for Saturday, September 10th, from 9:00 AM to 1:00 PM. Volunteers
          will help with planting native trees, clearing invasive plants, and more. It's a fantastic way to make a positive impact
          on the environment. Are you available on that date?
        </Bubble>
        <Bubble mine time="5:40 pm">
          Thanks for the quick response! The date works for me, and I'm excited to contribute. Do I need to bring any specific
          tools or materials?
        </Bubble>
      </div>
    </Phone>
  );
}

function ResultsScreen() {
  return (
    <Phone footer={<TabBar />}>
      <SearchHeader />
      <div className="mt-[11px] border-t border-[#d9d9d9] px-4 pt-3">
        <H2>Showing Results for ‘Search Term’</H2>
        <div className="mt-3 grid gap-[10px]">
          <OpportunityCard />
          <OpportunityCard />
          <OpportunityCard />
        </div>
      </div>
    </Phone>
  );
}

export default function App() {
  return (
    <main className="grid grid-cols-6 items-start gap-x-10 gap-y-[71px] bg-white font-[Inter,sans-serif] text-black">
      <HomeScreen />
      <OpportunityScreen />
      <BrowseScreen />
      <AgendaScreen />
      <CategoryScreen />
      <OrganizationScreen />
      <CalendarScreen />
      <ProfileScreen />
      <MessagesScreen />
      <ChatScreen />
      <ResultsScreen />
    </main>
  );
}
